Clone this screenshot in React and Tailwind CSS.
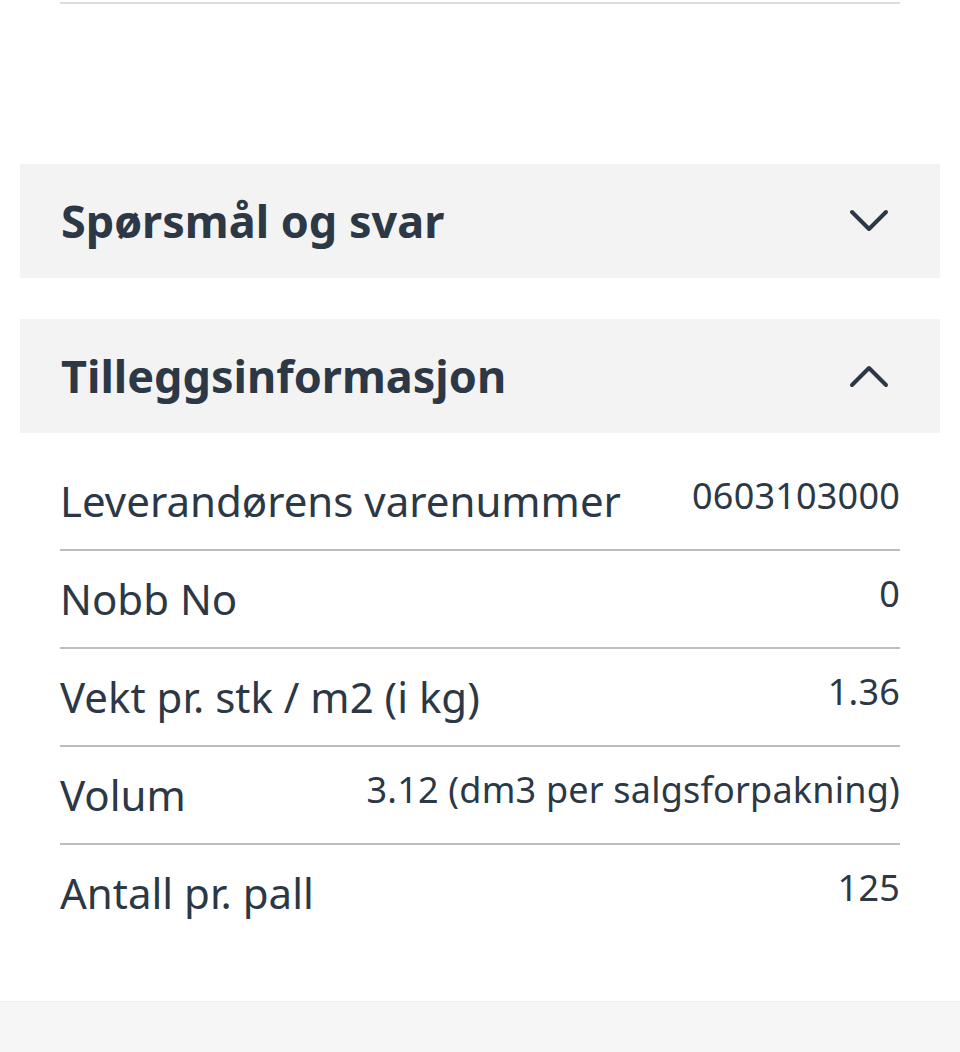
import { useState } from "react";

const rows = [
  { label: "Leverandørens varenummer", value: "0603103000" },
  { label: "Nobb No", value: "0" },
  { label: "Vekt pr. stk / m2 (i kg)", value: "1.36" },
  { label: "Volum", value: "3.12 (dm3 per salgsforpakning)" },
  { label: "Antall pr. pall", value: "125" },
];

const Chevron = ({ up }) => (
  <svg width="40" height="24" viewBox="0 0 40 24" fill="none" className="text-[#2c3845]">
    <polyline
      points={up ? "3,21 20,4 37,21" : "3,3 20,20 37,3"}
      stroke="currentColor"
      strokeWidth="4"
      strokeLinecap="round"
      strokeLinejoin="round"
    />
  </svg>
);

const AccordionHeader = ({ title, open, onClick }) => (
  <button
    onClick={onClick}
    className="w-full h-[114px] bg-[#f3f3f3] flex items-center justify-between pl-[41px] pr-[51px] text-left"
  >
    <span className="text-[45px] font-bold text-[#2c3845]">{title}</span>
    <Chevron up={open} />
  </button>
);

export default function App() {
  const [faqOpen, setFaqOpen] = useState(false);
  const [infoOpen, setInfoOpen] = useState(true);

  return (
    <div
      className="w-[960px] h-[1052px] bg-white flex flex-col overflow-hidden"
      style={{ fontFamily: '"Noto Sans", "Open Sans", sans-serif' }}
    >
      {/* end of previous section */}
      <div className="px-[60px] pt-[2px]">
        <div className="h-[2px] bg-[#dcdcdc]"></div>
      </div>

      <div className="px-[20px] mt-[160px]">
        <AccordionHeader title="Spørsmål og svar" open={faqOpen} onClick={() => setFaqOpen(!faqOpen)} />
      </div>

      <div className="px-[20px] mt-[41px]">
        <AccordionHeader title="Tilleggsinformasjon" open={infoOpen} onClick={() => setInfoOpen(!infoOpen)} />
      </div>

      {infoOpen && (
        <div className="px-[60px] mt-[20px]">
          {rows.map((row, i) => (
            <div key={row.label}>
              <div className="flex items-start justify-between gap-6 pt-[16px] pb-[17px] text-[#2c3845]">
                <span className="text-[42px] leading-[63px] whitespace-nowrap">{row.label}</span>
                <span className="text-[36px] leading-[54px] whitespace-nowrap text-right tracking-[0.2px]">
                  {row.value}
                </span>
              </div>
              {i < rows.length - 1 && <div className="h-[2px] bg-[#bdbdbd]"></div>}
            </div>
          ))}
        </div>
      )}

      <div className="flex-1"></div>
      <div className="h-[51px] bg-[#f6f6f6] border-t border-[#f0f0f0]"></div>
    </div>
  );
}
